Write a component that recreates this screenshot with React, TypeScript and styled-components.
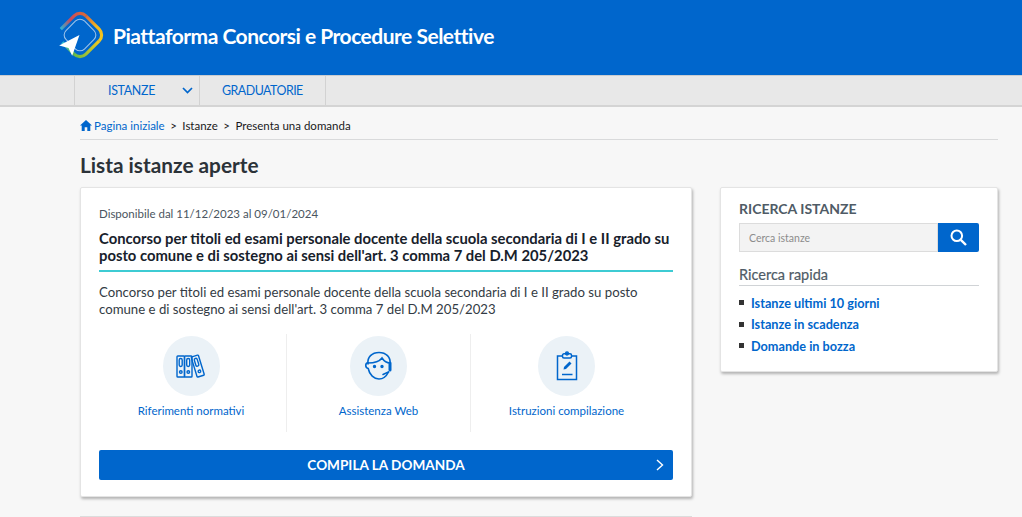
import styled, { createGlobalStyle } from "styled-components";

const GlobalStyle = createGlobalStyle`
    html, body {
        margin: 0;
        padding: 0;
        height: 517px;
        overflow: hidden;
        background-color: #f7f7f7;
        font-family: Lato, "Noto Sans", sans-serif;
    }
    * { box-sizing: border-box; }
`;

/*blue top bar with logo and site title*/
const Header = styled.header`
    height: 75px;
    background-color: #0066cc;
    display: flex;
    align-items: center;
    padding: 0 0 5px 56px;
    gap: 9px;
`;

const SiteTitle = styled.h1`
    margin: 0;
    color: #fff;
    font-size: 21px;
    font-weight: 700;
    letter-spacing: -0.5px;
`;

/*grey nav bar*/
const Nav = styled.nav`
    height: 32px;
    background-color: #e8e8e8;
    border-top: 1px solid #c9ccd0;
    border-bottom: 2px solid #d4d4d4;
    padding-left: 74px;
    display: flex;
`;

const NavItem = styled.a<{ $wide?: boolean }>`
    width: ${(p) => (p.$wide ? 127 : 125)}px;
    border-left: 1px solid #d2d2d2;
    border-right: ${(p) => (p.$wide ? "1px solid #d2d2d2" : "none")};
    display: flex;
    align-items: center;
    color: #0066cc;
    font-size: 12.4px;
    letter-spacing: ${(p) => (p.$wide ? -0.5 : -0.3)}px;
    padding-left: ${(p) => (p.$wide ? 22 : 33)}px;
    position: relative;
`;

const NavChevron = styled.svg`
    position: absolute;
    right: 6px;
    top: 11px;
`;

const Page = styled.div`
    padding: 0 24px 0 80px;
`;

const Breadcrumb = styled.div`
    height: 33px;
    border-bottom: 1px solid #d9dadb;
    display: flex;
    align-items: center;
    font-size: 11.5px;
    color: #19191a;
    gap: 5.5px;
    padding-top: 5px;
`;

const CrumbLink = styled.a`
    color: #0066cc;
    display: flex;
    align-items: center;
    gap: 2px;
`;

const Title = styled.h2`
    margin: 12px 0 10px;
    font-size: 20.8px;
    line-height: 25px;
    font-weight: 700;
    color: #2b3238;
`;

const Columns = styled.div`
    display: flex;
    align-items: flex-start;
    gap: 28px;
`;

const Card = styled.section`
    width: 612px;
    height: 310px;
    background-color: #fff;
    border-radius: 2px;
    border: 1px solid #e4e4e4;
    box-shadow: 1px 2px 3px rgba(0, 0, 0, 0.28);
    padding: 18px 18px 0;
`;

const Dates = styled.div`
    font-size: 11.5px;
    line-height: 16px;
    color: #4a5560;
`;

const CardTitle = styled.h3`
    margin: 8px 0 0;
    padding-bottom: 6px;
    border-bottom: 2px solid #3ecbd3;
    font-size: 14.8px;
    line-height: 17px;
    font-weight: 700;
    color: #17212b;
`;

const CardText = styled.p`
    margin: 12px 0 0;
    font-size: 13.2px;
    line-height: 17px;
    color: #333b44;
`;

const Links = styled.div`
    margin-top: 16px;
    display: grid;
    grid-template-columns: 187px 184px 1fr;
`;

const LinkCell = styled.a<{ $divided?: boolean; $inset?: number }>`
    height: 98px;
    display: flex;
    flex-direction: column;
    align-items: center;
    padding: 2px ${(p) => p.$inset ?? 0}px 0 0;
    color: #0066cc;
    font-size: 11.5px;
    border-left: ${(p) => (p.$divided ? "1px solid #eeeeee" : "none")};
`;

const IconCircle = styled.div`
    width: 57px;
    height: 60px;
    border-radius: 50%;
    background-color: #ebf2f7;
    display: flex;
    align-items: center;
    justify-content: center;
    margin-bottom: 8px;
`;

const ActionButton = styled.a`
    margin-top: 18px;
    height: 30px;
    border-radius: 2px;
    background-color: #0066cc;
    color: #fff;
    font-size: 13.6px;
    font-weight: 700;
    display: flex;
    align-items: center;
    justify-content: center;
    position: relative;
`;

const ButtonChevron = styled.svg`
    position: absolute;
    right: 9px;
    top: 9px;
`;

const Side = styled.aside`
    width: 278px;
    height: 185px;
    background-color: #fff;
    border-radius: 2px;
    border: 1px solid #e4e4e4;
    box-shadow: 1px 2px 3px rgba(0, 0, 0, 0.28);
    padding: 11px 18px 0;
`;

const SideTitle = styled.h3`
    margin: 0;
    font-size: 14px;
    line-height: 20px;
    font-weight: 700;
    color: #4f5b66;
`;

const SearchRow = styled.div`
    margin-top: 4px;
    display: flex;
    height: 29px;
`;

const SearchField = styled.div`
    flex: 1;
    background-color: #f3f3f3;
    border: 1px solid #dcdcdc;
    color: #8c8c8c;
    font-size: 10.5px;
    display: flex;
    align-items: center;
    padding-left: 9px;
`;

const SearchButton = styled.button`
    width: 41px;
    border: none;
    padding: 0;
    background-color: #0066cc;
    border-radius: 0 2px 2px 0;
    display: flex;
    align-items: center;
    justify-content: center;
`;

const QuickTitle = styled.h4`
    margin: 14px 0 0;
    padding-bottom: 1px;
    border-bottom: 1px solid #d0d3d6;
    font-size: 14.5px;
    line-height: 18px;
    font-weight: 400;
    -webkit-text-stroke: 0.2px #4f5b66;
    color: #4f5b66;
`;

const QuickList = styled.ul`
    list-style: none;
    margin: 6px 0 0;
    padding: 0;
`;

const QuickItem = styled.li`
    height: 21.5px;
    display: flex;
    align-items: center;
    gap: 7px;
    color: #0066cc;
    font-size: 12.7px;
    font-weight: 700;

    &::before {
        content: "";
        width: 5px;
        height: 5px;
        background-color: #333;
    }
`;

const NextCard = styled.div`
    position: absolute;
    left: 80px;
    top: 516px;
    width: 612px;
    height: 20px;
    background-color: #fff;
    border: 1px solid #dcdcdc;
`;

function Logo() {
    return (
        <svg width="48" height="48" viewBox="0 0 46 46" fill="none">
            <defs>
                <linearGradient id="ringLeft" gradientUnits="userSpaceOnUse" x1="6" y1="32" x2="14" y2="6">
                    <stop offset="0" stopColor="#2bb6d6" />
                    <stop offset="0.45" stopColor="#c9495c" />
                    <stop offset="1" stopColor="#d9683a" />
                </linearGradient>
                <linearGradient id="ringTop" gradientUnits="userSpaceOnUse" x1="14" y1="6" x2="40" y2="14">
                    <stop offset="0" stopColor="#d9683a" />
                    <stop offset="0.5" stopColor="#f2b722" />
                    <stop offset="1" stopColor="#f4c81e" />
                </linearGradient>
                <linearGradient id="ringRight" gradientUnits="userSpaceOnUse" x1="40" y1="14" x2="32" y2="40">
                    <stop offset="0" stopColor="#f4c81e" />
                    <stop offset="1" stopColor="#6cbb45" />
                </linearGradient>
                <linearGradient id="ringBottom" gradientUnits="userSpaceOnUse" x1="32" y1="40" x2="16" y2="40">
                    <stop offset="0" stopColor="#6cbb45" />
                    <stop offset="1" stopColor="#2bb6d6" />
                </linearGradient>
            </defs>
            <g transform="rotate(45 23 23)" strokeWidth="3">
                <path d="M6 32 V14 A8 8 0 0 1 14 6" stroke="url(#ringLeft)" />
                <path d="M14 6 H32 A8 8 0 0 1 40 14" stroke="url(#ringTop)" />
                <path d="M40 14 V32 A8 8 0 0 1 32 40" stroke="url(#ringRight)" />
                <path d="M32 40 H16" stroke="url(#ringBottom)" />
                <rect x="10.5" y="10.5" width="25" height="25" rx="6" stroke="#9cc2ea" strokeWidth="1" />
            </g>
            <path d="M3 33 L22.5 23 L15.5 43 L12 35.5 Z" fill="#fff" />
        </svg>
    );
}

function BindersIcon() {
    return (
        <svg width="30" height="26" viewBox="0 0 30 26" fill="none" stroke="#0066cc" strokeWidth="1.4">
            <rect x="1" y="3" width="7.5" height="21" rx="0.8" />
            <rect x="8.5" y="3" width="7.5" height="21" rx="0.8" />
            <rect x="3.2" y="5.5" width="3" height="8" rx="1.4" />
            <rect x="10.7" y="5.5" width="3" height="8" rx="1.4" />
            <circle cx="4.8" cy="19" r="1.3" />
            <circle cx="12.3" cy="19" r="1.3" />
            <g transform="rotate(-17 22 13)">
                <rect x="18" y="2.5" width="7.5" height="21" rx="0.8" />
                <rect x="20.2" y="5" width="3" height="8" rx="1.4" />
                <circle cx="21.8" cy="18.5" r="1.3" />
            </g>
        </svg>
    );
}

function AgentIcon() {
    return (
        <svg width="30" height="30" viewBox="0 0 30 30" fill="none" stroke="#0066cc" strokeWidth="1.6" strokeLinecap="round">
            <path d="M4 13 C3 6 8 1.5 15 1.5 C22 1.5 27 6 26 13" />
            <path d="M4 12 C9 12 15 11 18 7 C20 10 23 12 26 12" />
            <path d="M4 11.5 C1 12 1 17 4.2 17.5 C5.5 24 10 28 15 28 C19 28 22 26 24.5 21" />
            <path d="M26 12 V19" strokeWidth="3" />
            <path d="M24.5 21 L19 23.5" />
            <circle cx="10.5" cy="15.5" r="0.9" fill="#0066cc" />
            <circle cx="18" cy="15.5" r="0.9" fill="#0066cc" />
        </svg>
    );
}

function ClipboardIcon() {
    return (
        <svg width="22" height="30" viewBox="0 0 22 30" fill="none" stroke="#0066cc" strokeWidth="1.5">
            <rect x="1.5" y="5" width="19" height="23.5" />
            <rect x="6.5" y="2.8" width="9" height="4.2" rx="1.5" fill="#ebf2f7" />
            <circle cx="11" cy="2.5" r="1.4" />
            <path d="M6 23.5 H16.5" />
            <path d="M7.5 18.5 L8 16 L13.5 10.5 L15.5 12.5 L10 18 Z" fill="#0066cc" stroke="none" />
        </svg>
    );
}

export default function App() {
    return (
        <>
            <GlobalStyle />
            <Header>
                <Logo />
                <SiteTitle>Piattaforma Concorsi e Procedure Selettive</SiteTitle>
            </Header>
            <Nav>
                <NavItem>
                    ISTANZE
                    <NavChevron width="11" height="7" viewBox="0 0 11 7" fill="none" stroke="#0066cc" strokeWidth="1.7">
                        <path d="M1 1 L5.5 5.5 L10 1" />
                    </NavChevron>
                </NavItem>
                <NavItem $wide>GRADUATORIE</NavItem>
            </Nav>
            <Page>
                <Breadcrumb>
                    <CrumbLink>
                        <svg width="12" height="11" viewBox="0 0 12 11" fill="#0066cc">
                            <path d="M6 0 L12 5.6 H10.3 V11 H7.3 V7.2 H4.7 V11 H1.7 V5.6 H0 Z" />
                        </svg>
                        Pagina iniziale
                    </CrumbLink>
                    <span>&gt;</span>
                    <span>Istanze</span>
                    <span>&gt;</span>
                    <span>Presenta una domanda</span>
                </Breadcrumb>
                <Title>Lista istanze aperte</Title>
                <Columns>
                    <Card>
                        <Dates>Disponibile dal 11/12/2023 al 09/01/2024</Dates>
                        <CardTitle>
                            Concorso per titoli ed esami personale docente della scuola secondaria di I e II grado su posto comune e di sostegno ai sensi dell'art. 3 comma 7 del D.M 205/2023
                        </CardTitle>
                        <CardText>
                            Concorso per titoli ed esami personale docente della scuola secondaria di I e II grado su posto comune e di sostegno ai sensi dell'art. 3 comma 7 del D.M 205/2023
                        </CardText>
                        <Links>
                            <LinkCell $inset={3}>
                                <IconCircle><BindersIcon /></IconCircle>
                                Riferimenti normativi
                            </LinkCell>
                            <LinkCell $divided>
                                <IconCircle><AgentIcon /></IconCircle>
                                Assistenza Web
                            </LinkCell>
                            <LinkCell $divided $inset={11}>
                                <IconCircle><ClipboardIcon /></IconCircle>
                                Istruzioni compilazione
                            </LinkCell>
                        </Links>
                        <ActionButton>
                            COMPILA LA DOMANDA
                            <ButtonChevron width="8" height="12" viewBox="0 0 8 12" fill="none" stroke="#fff" strokeWidth="1.4">
                                <path d="M1 1 L6.5 6 L1 11" />
                            </ButtonChevron>
                        </ActionButton>
                    </Card>
                    <Side>
                        <SideTitle>RICERCA ISTANZE</SideTitle>
                        <SearchRow>
                            <SearchField>Cerca istanze</SearchField>
                            <SearchButton>
                                <svg width="17" height="17" viewBox="0 0 17 17" fill="none" stroke="#fff" strokeWidth="2">
                                    <circle cx="6.8" cy="6.8" r="5.3" />
                                    <path d="M10.8 10.8 L16 16" strokeWidth="2.4" />
                                </svg>
                            </SearchButton>
                        </SearchRow>
                        <QuickTitle>Ricerca rapida</QuickTitle>
                        <QuickList>
                            <QuickItem>Istanze ultimi 10 giorni</QuickItem>
                            <QuickItem>Istanze in scadenza</QuickItem>
                            <QuickItem>Domande in bozza</QuickItem>
                        </QuickList>
                    </Side>
                </Columns>
            </Page>
            <NextCard />
        </>
    );
}
